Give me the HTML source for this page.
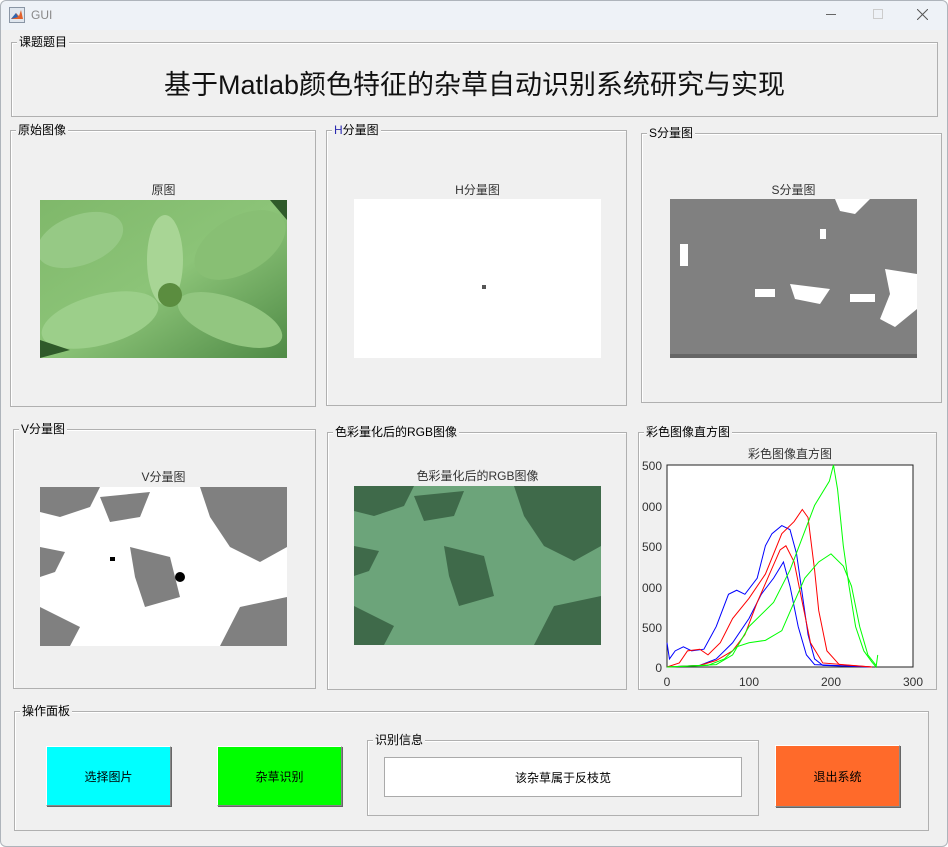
<!DOCTYPE html>
<html><head><meta charset="utf-8"><style>
*{margin:0;padding:0;box-sizing:border-box}
body{width:948px;height:847px;background:#fff;position:relative;overflow:hidden;font-family:"Liberation Sans","Noto Sans CJK SC",sans-serif;font-size:12px;color:#000}
.win{position:absolute;left:0;top:0;width:948px;height:847px;background:#f0f0f0;box-shadow:inset 0 0 0 1px #aeb4bb;border-radius:6px}
.tb{position:absolute;left:1px;top:1px;width:946px;height:29px;background:#eef2f7;border-radius:6px 6px 0 0}
.p{position:absolute;border:1px solid #b0b0b0;box-shadow:1px 1px 0 #fff inset}
.lg{position:absolute;top:-8px;left:5px;background:#f0f0f0;padding:0 2px;font-size:12px;line-height:14px;white-space:nowrap}
.t{position:absolute;font-size:12px;color:#333;text-align:center;white-space:nowrap}
.btn{position:absolute;border:1px solid #888;border-top-color:#fff;border-left-color:#fff;box-shadow:1px 1px 0 #666;display:flex;align-items:center;justify-content:center;font-size:12px}
.im{position:absolute}
</style></head><body>
<div class="win">
<div class="tb">
<svg style="position:absolute;left:8px;top:6px" width="16" height="16"><rect x="0.5" y="0.5" width="15" height="15" fill="#dfe6ee" stroke="#8a96a5"/><path d="M2 12 L7 6 L10 9 L12 3 L14 12 Z" fill="#e2612b"/><path d="M2 12 L7 6 L9 10 Z" fill="#2a66b4"/></svg>
<div style="position:absolute;left:30px;top:7px;font-size:12px;color:#888">GUI</div>
<div style="position:absolute;left:825px;top:13px;width:10px;height:1px;background:#666"></div>
<div style="position:absolute;left:872px;top:8px;width:10px;height:10px;border:1px solid #ccc"></div>
<svg style="position:absolute;left:916px;top:8px" width="11" height="11"><path d="M0 0L11 11M11 0L0 11" stroke="#555" stroke-width="1"/></svg>
</div>

<div class="p" style="left:11px;top:42px;width:927px;height:75px"><span class="lg">课题题目</span>
<div style="position:absolute;left:0;right:0;top:20px;text-align:center;font-size:27px;color:#111">基于Matlab颜色特征的杂草自动识别系统研究与实现</div></div>

<div class="p" style="left:10px;top:130px;width:306px;height:277px"><span class="lg">原始图像</span></div>
<div class="t" style="left:40px;width:247px;top:181px">原图</div>
<svg class="im" style="left:40px;top:200px" width="247" height="158"><defs><linearGradient id="g1" x1="0" y1="0" x2="1" y2="1"><stop offset="0" stop-color="#7fb86a"/><stop offset=".5" stop-color="#8cc478"/><stop offset="1" stop-color="#4f8a46"/></linearGradient></defs><rect width="247" height="158" fill="url(#g1)"/>
<ellipse cx="40" cy="40" rx="45" ry="25" fill="#96c985" transform="rotate(-20 40 40)"/><ellipse cx="200" cy="45" rx="50" ry="28" fill="#88bf74" transform="rotate(-30 200 45)"/><ellipse cx="60" cy="120" rx="60" ry="25" fill="#9ccf8a" transform="rotate(-15 60 120)"/><ellipse cx="190" cy="120" rx="55" ry="22" fill="#92c680" transform="rotate(20 190 120)"/><ellipse cx="125" cy="60" rx="18" ry="45" fill="#a8d595"/><circle cx="130" cy="95" r="12" fill="#5b8d3f"/><path d="M0 158 L30 150 L0 140Z M230 0 L247 0 L247 20Z" fill="#2f5a2a"/></svg>

<div class="p" style="left:326px;top:130px;width:301px;height:276px"><span class="lg"><span style="color:#2b2bb0">H</span>分量图</span></div>
<div class="t" style="left:354px;width:247px;top:181px">H分量图</div>
<div class="im" style="left:354px;top:199px;width:247px;height:159px;background:#fff"></div>
<div class="im" style="left:482px;top:285px;width:4px;height:4px;background:#555"></div>

<div class="p" style="left:641px;top:133px;width:301px;height:270px"><span class="lg">S分量图</span></div>
<div class="t" style="left:670px;width:247px;top:181px">S分量图</div>
<svg class="im" style="left:670px;top:199px" width="247" height="159"><rect width="247" height="159" fill="#808080"/><g fill="#fff"><path d="M165 0L200 0L185 15L170 12Z"/><path d="M215 70L247 75L247 110L225 128L210 120L220 95Z"/><path d="M120 85L160 90L150 105L125 100Z"/><rect x="10" y="45" width="8" height="22"/><rect x="150" y="30" width="6" height="10"/><rect x="85" y="90" width="20" height="8"/><rect x="180" y="95" width="25" height="8"/></g><rect x="0" y="155" width="247" height="4" fill="#000" opacity=".2"/></svg>

<div class="p" style="left:13px;top:429px;width:303px;height:260px"><span class="lg">V分量图</span></div>
<div class="t" style="left:40px;width:247px;top:468px">V分量图</div>
<svg class="im" style="left:40px;top:487px" width="247" height="159"><rect width="247" height="159" fill="#fff"/><g fill="#808080"><path d="M0 0L60 0L50 20L20 30L0 25Z"/><path d="M160 0L247 0L247 60L220 75L190 60L170 30Z"/><path d="M0 120L40 140L30 159L0 159Z"/><path d="M200 120L247 110L247 159L180 159Z"/><path d="M90 60L130 70L140 110L105 120L95 90Z"/><path d="M60 10L110 5L100 30L70 35Z"/><path d="M0 60L25 65L15 85L0 90Z"/></g><circle cx="140" cy="90" r="5" fill="#000"/><rect x="70" y="70" width="5" height="4" fill="#000"/></svg>

<div class="p" style="left:327px;top:432px;width:300px;height:258px"><span class="lg">色彩量化后的RGB图像</span></div>
<div class="t" style="left:354px;width:247px;top:467px">色彩量化后的RGB图像</div>
<svg class="im" style="left:354px;top:486px" width="247" height="159"><rect width="247" height="159" fill="#6ca47a"/><g fill="#3f6a4a"><path d="M0 0L60 0L50 20L20 30L0 25Z"/><path d="M160 0L247 0L247 60L220 75L190 60L170 30Z"/><path d="M0 120L40 140L30 159L0 159Z"/><path d="M200 120L247 110L247 159L180 159Z"/><path d="M90 60L130 70L140 110L105 120L95 90Z"/><path d="M60 10L110 5L100 30L70 35Z"/><path d="M0 60L25 65L15 85L0 90Z"/></g></svg>

<div class="p" style="left:638px;top:432px;width:299px;height:258px"><span class="lg">彩色图像直方图</span></div>
<div class="t" style="left:667px;width:246px;top:445px;font-size:12px">彩色图像直方图</div>
<svg class="im" style="left:630px;top:455px" width="300" height="235">
<rect x="37" y="10" width="246" height="202" fill="#fff" stroke="#222" stroke-width="1"/>
<g font-size="12" fill="#333" font-family="Liberation Sans,sans-serif" text-anchor="end">
<text x="32" y="15">500</text><text x="32" y="56">000</text><text x="32" y="96">500</text><text x="32" y="137">000</text><text x="32" y="177">500</text><text x="32" y="217">0</text></g>
<g font-size="12" fill="#333" font-family="Liberation Sans,sans-serif" text-anchor="middle"><text x="37" y="231">0</text><text x="119" y="231">100</text><text x="201" y="231">200</text><text x="283" y="231">300</text></g>
<g transform="translate(37,212) scale(0.82,-0.0808)" fill="none">
<polyline vector-effect="non-scaling-stroke" stroke="#00f" points="0,300 3,100 10,200 20,250 30,200 45,220 60,500 75,900 85,950 95,900 110,1100 120,1500 128,1650 140,1750 150,1700 158,1400 165,900 172,400 180,100 190,20 250,0"/>
<polyline vector-effect="non-scaling-stroke" stroke="#00f" points="0,0 40,20 60,100 80,300 100,600 115,900 130,1100 142,1300 150,1000 160,500 170,150 180,30 250,0"/>
<polyline vector-effect="non-scaling-stroke" stroke="#f00" points="0,0 15,50 25,200 40,220 50,150 65,300 80,600 100,850 120,1150 140,1650 155,1800 165,1950 172,1850 180,1200 185,700 195,200 210,30 250,0"/>
<polyline vector-effect="non-scaling-stroke" stroke="#f00" points="0,0 40,20 60,80 80,200 95,400 110,800 125,1150 138,1450 145,1500 155,1300 165,800 175,300 190,50 250,0"/>
<polyline vector-effect="non-scaling-stroke" stroke="#0f0" points="0,0 60,30 80,150 100,500 130,800 150,1200 165,1600 180,2000 198,2300 203,2500 208,2200 215,1500 222,1000 230,500 240,200 250,60 255,0 257,150"/>
<polyline vector-effect="non-scaling-stroke" stroke="#0f0" points="0,0 50,20 70,100 85,250 100,300 120,330 140,450 155,800 168,1100 185,1300 200,1400 215,1250 225,1000 235,500 245,150 255,20"/>
</g></svg>

<div class="p" style="left:14px;top:711px;width:915px;height:120px"><span class="lg">操作面板</span></div>
<div class="btn" style="left:46px;top:746px;width:125px;height:60px;background:#0ff">选择图片</div>
<div class="btn" style="left:217px;top:746px;width:125px;height:60px;background:#0f0">杂草识别</div>
<div class="p" style="left:367px;top:740px;width:392px;height:76px"><span class="lg">识别信息</span></div>
<div style="position:absolute;left:384px;top:757px;width:358px;height:40px;background:#fff;border:1px solid #aaa;display:flex;align-items:center;justify-content:center">该杂草属于反枝苋</div>
<div class="btn" style="left:775px;top:745px;width:125px;height:62px;background:#ff6a2a">退出系统</div>
</div>
</body></html>
